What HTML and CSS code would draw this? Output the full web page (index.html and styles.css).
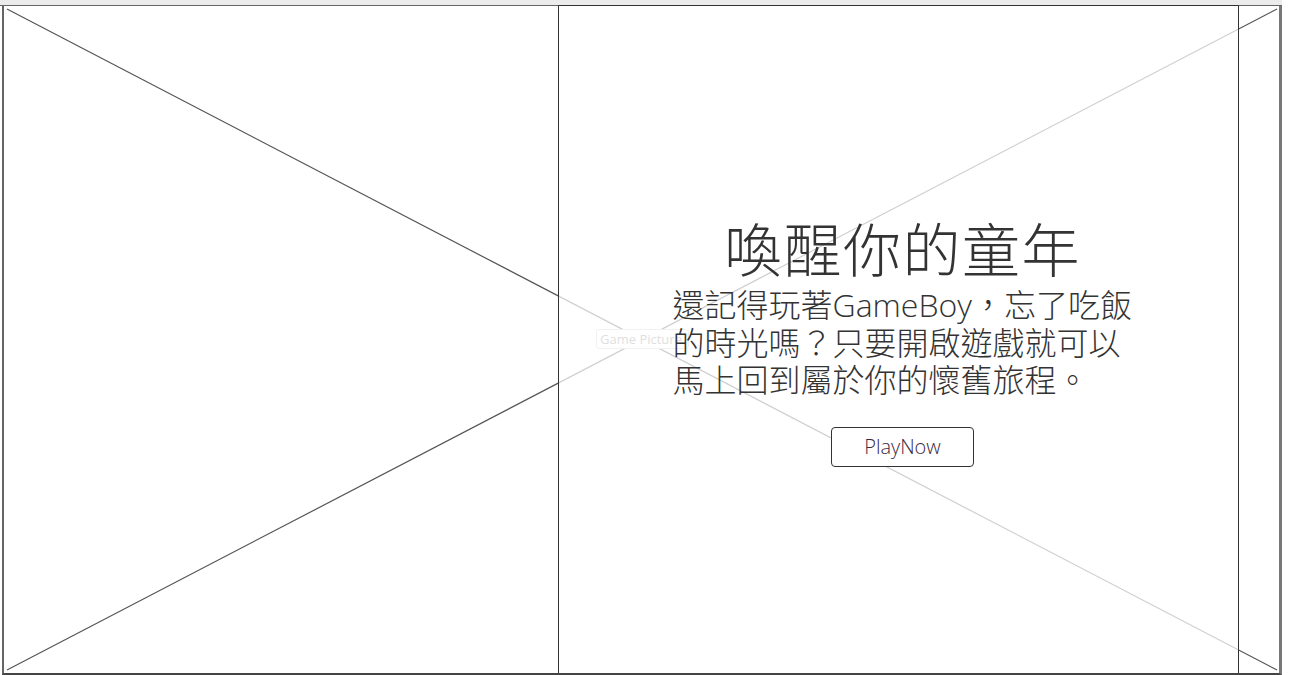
FILE: index.html
```html
<!DOCTYPE html>
<html lang="zh-Hant">
<head>
<meta charset="utf-8">
<title>GameBoy</title>
<link rel="stylesheet" href="styles.css">
</head>
<body>
<div class="topbar"></div>
<section class="stage">
  <div class="placeholder">
    <svg class="cross" viewBox="0 0 1275 667" preserveAspectRatio="none" aria-hidden="true">
      <line x1="3" y1="3" x2="1273" y2="664" />
      <line x1="3" y1="664" x2="1273" y2="3" />
    </svg>
    <span class="ph-label">Game Picture</span>
  </div>
  <div class="panel">
    <div class="content">
      <h1 class="title">喚醒你的童年</h1>
      <p class="lead">還記得玩著GameBoy，忘了吃飯的時光嗎？只要開啟遊戲就可以馬上回到屬於你的懷舊旅程。</p>
      <button class="play">PlayNow</button>
    </div>
  </div>
</section>
</body>
</html>
```
FILE: styles.css
```css
html, body {
  margin: 0;
  padding: 0;
  background: #fff;
}
body {
  font-family: "Open Sans", "Noto Sans CJK TC", sans-serif;
  color: #333;
}
.topbar {
  width: 1282px;
  height: 5px;
  background: #ececec;
  border-bottom: 1px solid #666;
}
.stage {
  position: relative;
  margin-left: 2px;
  width: 1275px;
  height: 667px;
  border-left: 2px solid #666;
  border-right: 3px solid #777;
  border-bottom: 2px solid #444;
}
.placeholder {
  position: absolute;
  inset: 0;
}
.cross {
  width: 100%;
  height: 100%;
  display: block;
}
.cross line {
  stroke: #555;
  stroke-width: 1.2;
}
.ph-label {
  position: absolute;
  left: 592px;
  top: 323px;
  width: 88px;
  height: 18px;
  font-size: 13px;
  line-height: 18px;
  color: #888;
  border: 1px solid #ccc;
  border-radius: 3px;
  padding: 0 0 0 3px;
  background: #fff;
  white-space: nowrap;
  overflow: hidden;
}
.panel {
  position: absolute;
  top: -1px;
  bottom: 0;
  left: 554px;
  width: 681px;
  border-top: 1px solid #333;
  border-left: 1px solid #333;
  border-right: 1px solid #333;
  background: rgba(255, 255, 255, 0.72);
  display: flex;
  align-items: center;
  justify-content: center;
  padding-left: 8px;
  box-sizing: border-box;
}
.content {
  display: flex;
  flex-direction: column;
  align-items: center;
  padding-top: 6px;
}
.title {
  margin: 0 0 4px;
  font-size: 58px;
  line-height: 64px;
  font-weight: 300;
  color: #333;
  letter-spacing: 1.5px;
}
.lead {
  margin: 0;
  width: 460px;
  font-size: 32px;
  line-height: 37.5px;
  font-weight: 300;
  color: #333;
}
.play {
  margin-top: 28px;
  width: 143px;
  height: 40px;
  border: 1px solid #333;
  border-radius: 4px;
  background: #fff;
  font-family: "Open Sans", sans-serif;
  font-weight: 300;
  font-size: 20px;
  color: #3a2a3e;
  padding: 0;
}
```
